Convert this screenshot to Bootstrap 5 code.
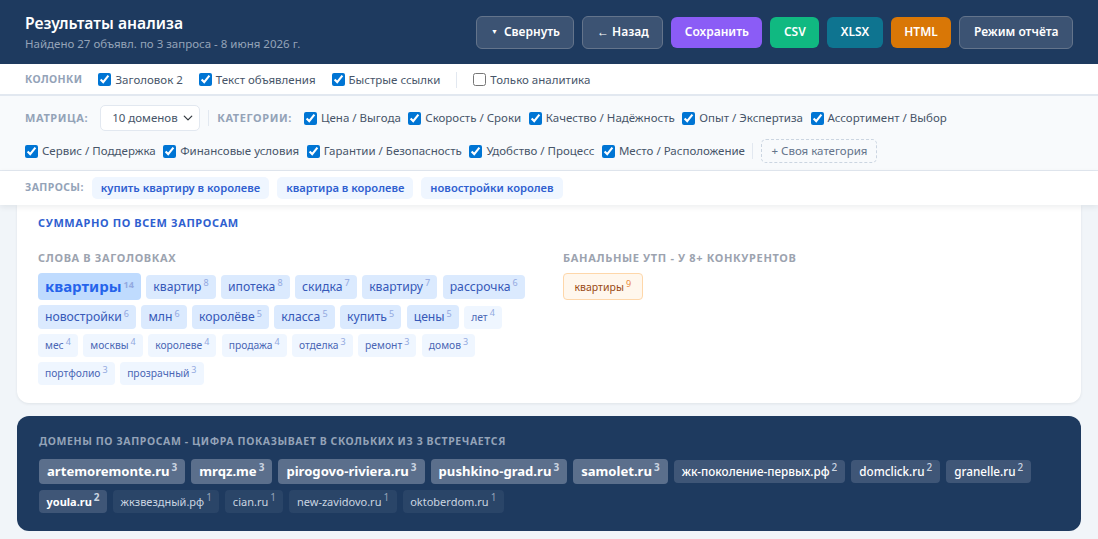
<!DOCTYPE html>
<html lang="ru">
<head>
  <meta charset="UTF-8">
  <title>Результаты анализа</title>
  <link href="https://cdn.jsdelivr.net/npm/bootstrap@5.3.0/dist/css/bootstrap.min.css" rel="stylesheet">
  <style>
    html, body { height: 539px; overflow: hidden; }
    body { background: #f1f5f9; font-family: "Noto Sans", "Open Sans", sans-serif; color: #334155; }
    .top-head { background: #1e3a5f; height: 64px; padding: 0 25px; }
    .top-title { font-size: 15.7px; font-weight: 600; color: #fff; line-height: 20px; margin: 0; }
    .top-sub { font-size: 11.5px; color: #94a3b8; line-height: 15px; margin-top: 3px; }
    .head-btn { height: 31px; padding: 0 13.5px; font-size: 12px; font-weight: 600; color: #fff; border-radius: 6px; border: 0; white-space: nowrap; }
    .head-btn:hover { color: #fff; }
    .btn-ghost { background: #3c5373; border: 1px solid #64748b; height: 33px; }
    .btn-violet { background: #8b5cf6; }
    .btn-green { background: #10b981; }
    .btn-teal { background: #0e7490; }
    .btn-amber { background: #d97706; }
    .caret-mark { font-size: 7px; vertical-align: 2px; margin-right: 6px; }
    .col-bar { height: 32px; background: #fff; border-bottom: 2px solid #e2e8f0; padding: 1px 25px 0; font-size: 11.5px; color: #475569; }
    .bar-label { font-size: 11px; font-weight: 700; letter-spacing: .6px; color: #94a3b8; white-space: nowrap; }
    .bar-label-sm { font-size: 10.5px; letter-spacing: .4px; }
    .chk { display: inline-flex; align-items: center; gap: 4px; white-space: nowrap; font-size: 11.5px; color: #475569; }
    .chk input { margin: 0; width: 13px; height: 13px; accent-color: #0075d4; }
    .v-sep { width: 1px; height: 16px; background: #e2e8f0; }
    .matrix-bar { background: #f8fafc; border-bottom: 1px solid #e2e8f0; padding: 9px 25px 0; height: 75px; }
    .matrix-row { height: 26px; }
    .matrix-row + .matrix-row { margin-top: 7px; }
    .matrix-row .chk { margin-right: 7.5px; }
    .label-gap { margin-right: 12px; }
    .dom-select { width: 100px; height: 26px; font-size: 11.5px; padding: 0 20px 0 11px; border-radius: 5px; background-position: right 5px center; background-size: 12px 10px; color: #475569; border-color: #e2e8f0; }
    .add-cat { border: 1px dashed #cbd5e1; border-radius: 5px; height: 24px; padding: 0 9px; font-size: 11.5px; color: #64748b; background: transparent; white-space: nowrap; }
    .query-bar { height: 34px; background: #fff; padding: 0 25px; box-shadow: 0 2px 6px rgba(15, 23, 42, .08); position: relative; z-index: 2; }
    .query-pill { background: #eff6ff; color: #2f5fd0; font-size: 11.2px; font-weight: 600; padding: 0 9px; height: 22px; line-height: 22px; border-radius: 5px; white-space: nowrap; }
    .page-body { padding: 0 17px; }
    .sum-card { background: #fff; border-radius: 0 0 12px 12px; box-shadow: 0 1px 3px rgba(15, 23, 42, .08); padding: 11px 21px 16px; height: 198px; }
    .sum-title { font-size: 11px; font-weight: 700; letter-spacing: .6px; color: #2f5fd0; line-height: 14px; margin-bottom: 21px; }
    .sub-title { font-size: 11px; font-weight: 700; letter-spacing: .65px; color: #9ca3af; line-height: 14px; margin-bottom: 8px; }
    .word-col { width: 525px; }
    .word-wrap { display: flex; flex-wrap: wrap; align-items: center; gap: 5px 5.5px; max-width: 490px; }
    .word { background: #dbeafe; color: #3659b8; border-radius: 4px; padding: 0 7px; font-size: 12.2px; height: 24px; line-height: 24px; white-space: nowrap; }
    .word sup { font-size: 9px; color: #93a9e0; margin-left: 2px; top: -.5em; }
    .word-big { background: #bfdbfe; color: #2563eb; font-weight: 700; font-size: 15px; height: 27px; line-height: 26px; }
    .word-low { background: #eff6ff; font-size: 10.3px; height: 23px; line-height: 23px; color: #4a67b5; }
    .word-ban { background: #fff7ed; color: #9a4a12; border: 1px solid #fed7aa; font-size: 10.5px; height: 27px; line-height: 26px; padding: 0 10.5px; }
    .word-ban sup { color: #ea8a3c; }
    .dom-card { background: #1e3a5f; border-radius: 12px; margin-top: 13px; height: 115px; padding: 18px 22px; }
    .dom-title { font-size: 10.5px; font-weight: 700; letter-spacing: .6px; color: #94a3b8; line-height: 14px; margin-bottom: 11px; }
    .dom-wrap { display: flex; flex-wrap: wrap; align-items: center; gap: 6px; }
    .dom-chip { border-radius: 4px; white-space: nowrap; color: #fff; }
    .dom-chip sup { font-size: 10px; margin-left: 2px; top: -.5em; color: #cbd5e1; }
    .lv3 { background: #5b6f8c; font-weight: 700; font-size: 13.1px; height: 25px; line-height: 25px; padding: 0 8px; }
    .lv2 { background: #3f5677; font-size: 11.7px; height: 23px; line-height: 23px; padding: 0 8px; font-weight: 500; }
    .lv2b { font-size: 11px; font-weight: 700; padding: 0 7.5px; }
    .lv1 { background: #2a4568; font-size: 11px; height: 23px; line-height: 23px; padding: 0 7.5px; color: #cbd5e1; }
    .lv1 sup { color: #94a3b8; }
  </style>
</head>
<body>

<header class="top-head d-flex align-items-center justify-content-between">
  <div>
    <h1 class="top-title">Результаты анализа</h1>
    <div class="top-sub">Найдено 27 объявл. по 3 запроса - 8 июня 2026 г.</div>
  </div>
  <div class="d-flex align-items-center gap-2">
    <button class="btn head-btn btn-ghost"><span class="caret-mark">▼</span>Свернуть</button>
    <button class="btn head-btn btn-ghost">← Назад</button>
    <button class="btn head-btn btn-violet">Сохранить</button>
    <button class="btn head-btn btn-green">CSV</button>
    <button class="btn head-btn btn-teal">XLSX</button>
    <button class="btn head-btn btn-amber">HTML</button>
    <button class="btn head-btn btn-ghost">Режим отчёта</button>
  </div>
</header>

<div class="col-bar d-flex align-items-center">
  <span class="bar-label bar-label-sm me-3">КОЛОНКИ</span>
  <label class="chk me-3"><input type="checkbox" checked>Заголовок 2</label>
  <label class="chk me-3"><input type="checkbox" checked>Текст объявления</label>
  <label class="chk me-3"><input type="checkbox" checked>Быстрые ссылки</label>
  <span class="v-sep me-3"></span>
  <label class="chk"><input type="checkbox">Только аналитика</label>
</div>

<div class="matrix-bar">
  <div class="matrix-row d-flex align-items-center">
    <span class="bar-label label-gap">МАТРИЦА:</span>
    <select class="form-select dom-select me-2"><option>10 доменов</option></select>
    <span class="v-sep me-2"></span>
    <span class="bar-label label-gap">КАТЕГОРИИ:</span>
    <label class="chk"><input type="checkbox" checked>Цена / Выгода</label>
    <label class="chk"><input type="checkbox" checked>Скорость / Сроки</label>
    <label class="chk"><input type="checkbox" checked>Качество / Надёжность</label>
    <label class="chk"><input type="checkbox" checked>Опыт / Экспертиза</label>
    <label class="chk"><input type="checkbox" checked>Ассортимент / Выбор</label>
  </div>
  <div class="matrix-row d-flex align-items-center">
    <label class="chk"><input type="checkbox" checked>Сервис / Поддержка</label>
    <label class="chk"><input type="checkbox" checked>Финансовые условия</label>
    <label class="chk"><input type="checkbox" checked>Гарантии / Безопасность</label>
    <label class="chk"><input type="checkbox" checked>Удобство / Процесс</label>
    <label class="chk"><input type="checkbox" checked>Место / Расположение</label>
    <span class="v-sep me-2"></span>
    <button class="add-cat">+ Своя категория</button>
  </div>
</div>

<div class="query-bar d-flex align-items-center gap-2">
  <span class="bar-label bar-label-sm">ЗАПРОСЫ:</span>
  <span class="query-pill">купить квартиру в королеве</span>
  <span class="query-pill">квартира в королеве</span>
  <span class="query-pill">новостройки королев</span>
</div>

<main class="page-body">
  <section class="sum-card">
    <div class="sum-title">СУММАРНО ПО ВСЕМ ЗАПРОСАМ</div>
    <div class="d-flex">
      <div class="word-col">
        <div class="sub-title">СЛОВА В ЗАГОЛОВКАХ</div>
        <div class="word-wrap">
          <span class="word word-big">квартиры<sup>14</sup></span>
          <span class="word">квартир<sup>8</sup></span>
          <span class="word">ипотека<sup>8</sup></span>
          <span class="word">скидка<sup>7</sup></span>
          <span class="word">квартиру<sup>7</sup></span>
          <span class="word">рассрочка<sup>6</sup></span>
          <span class="word">новостройки<sup>6</sup></span>
          <span class="word">млн<sup>6</sup></span>
          <span class="word">королёве<sup>5</sup></span>
          <span class="word">класса<sup>5</sup></span>
          <span class="word">купить<sup>5</sup></span>
          <span class="word">цены<sup>5</sup></span>
          <span class="word word-low">лет<sup>4</sup></span>
          <span class="word word-low">мес<sup>4</sup></span>
          <span class="word word-low">москвы<sup>4</sup></span>
          <span class="word word-low">королеве<sup>4</sup></span>
          <span class="word word-low">продажа<sup>4</sup></span>
          <span class="word word-low">отделка<sup>3</sup></span>
          <span class="word word-low">ремонт<sup>3</sup></span>
          <span class="word word-low">домов<sup>3</sup></span>
          <span class="word word-low">портфолио<sup>3</sup></span>
          <span class="word word-low">прозрачный<sup>3</sup></span>
        </div>
      </div>
      <div>
        <div class="sub-title">БАНАЛЬНЫЕ УТП - У 8+ КОНКУРЕНТОВ</div>
        <div class="word-wrap">
          <span class="word word-ban">квартиры<sup>9</sup></span>
        </div>
      </div>
    </div>
  </section>

  <section class="dom-card">
    <div class="dom-title">ДОМЕНЫ ПО ЗАПРОСАМ - ЦИФРА ПОКАЗЫВАЕТ В СКОЛЬКИХ ИЗ 3 ВСТРЕЧАЕТСЯ</div>
    <div class="dom-wrap">
      <span class="dom-chip lv3">artemoremonte.ru<sup>3</sup></span>
      <span class="dom-chip lv3">mrqz.me<sup>3</sup></span>
      <span class="dom-chip lv3">pirogovo-riviera.ru<sup>3</sup></span>
      <span class="dom-chip lv3">pushkino-grad.ru<sup>3</sup></span>
      <span class="dom-chip lv3">samolet.ru<sup>3</sup></span>
      <span class="dom-chip lv2">жк-поколение-первых.рф<sup>2</sup></span>
      <span class="dom-chip lv2">domclick.ru<sup>2</sup></span>
      <span class="dom-chip lv2">granelle.ru<sup>2</sup></span>
      <span class="dom-chip lv2 lv2b">youla.ru<sup>2</sup></span>
      <span class="dom-chip lv1">жкзвездный.рф<sup>1</sup></span>
      <span class="dom-chip lv1">cian.ru<sup>1</sup></span>
      <span class="dom-chip lv1">new-zavidovo.ru<sup>1</sup></span>
      <span class="dom-chip lv1">oktoberdom.ru<sup>1</sup></span>
    </div>
  </section>
</main>

<script src="https://cdn.jsdelivr.net/npm/bootstrap@5.3.0/dist/js/bootstrap.bundle.min.js"></script>
</body>
</html>
